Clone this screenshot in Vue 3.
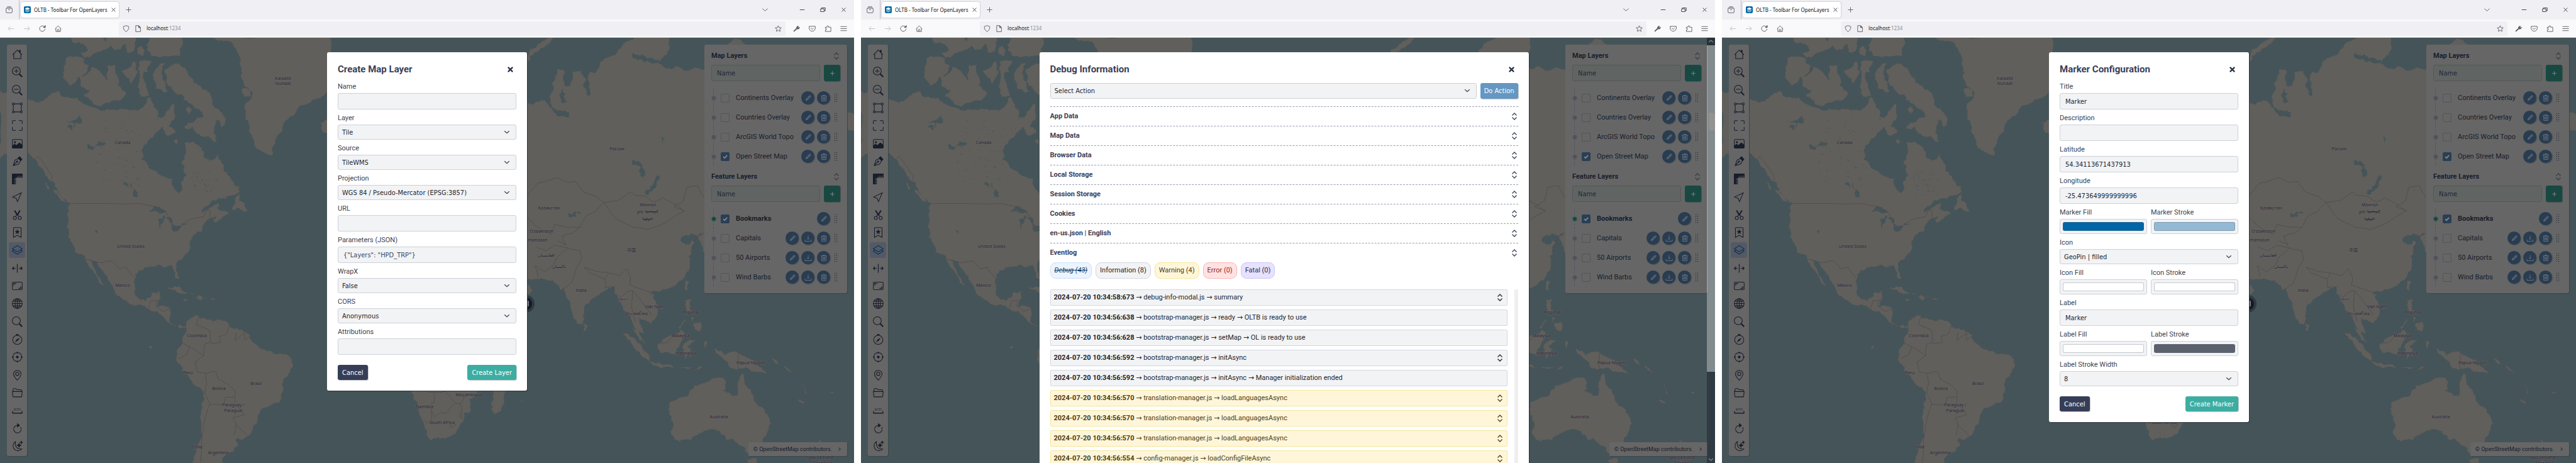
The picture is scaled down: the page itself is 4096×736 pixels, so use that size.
<script setup>
const icons = {
  home: '<path d="M1.5 13 12 2l10.500 11M4 11v10.500h16V11M17.500 3v4.500"/><path d="M16.500 3h2v5l-2-2z" fill="currentColor"/>',
  zoomIn: '<circle cx="9.800" cy="9.800" r="9"/><path d="M9.800 5v9.600M5 9.800h9.600"/><path d="m16.500 16.500 6.500 6.500" stroke-width="3"/>',
  zoomOut: '<circle cx="9.800" cy="9.800" r="9"/><path d="M5 9.800h9.600"/><path d="m16.500 16.500 6.500 6.500" stroke-width="3"/>',
  extent: '<circle cx="3" cy="3" r="2.200"/><circle cx="21" cy="3" r="2.200"/><circle cx="3" cy="21" r="2.200"/><circle cx="21" cy="21" r="2.200"/><path d="M5.200 3h13.600M5.200 21h13.600M3 5.200v13.600M21 5.200v13.600"/>',
  fullscreen: '<path d="M1 8.500V2.500Q1 1 2.500 1h6M15.500 1h6Q23 1 23 2.500v6M23 15.500v6q0 1.500-1.500 1.500h-6M8.500 23h-6Q1 23 1 21.500v-6"/>',
  image: '<rect x="1" y="2.500" width="22" height="19" rx="2"/><circle cx="6.800" cy="8.500" r="2.300" fill="currentColor" stroke="none"/><path d="M1 17l5-4 4 3 6.500-6L23 15v5q0 1.500-1.500 1.500h-19Q1 21.500 1 20z" fill="currentColor"/>',
  pen: '<path d="M3 21.500 7 9l8-3.500 4.500 5L15 18zM3 21.500l8-8.500"/><circle cx="11.500" cy="12.500" r="1.400" fill="currentColor"/><path d="m14 4.500 3-3 5.500 6-3 3z" fill="currentColor"/>',
  ruler: '<path d="M0 0h24v9h-2V4h-1v5h-2V6h-1v3h-2V4h-1v5h-2V6h-1v3H9v1H6v1h3v2H4v1h5v2H6v1h3v2H4v1h5v2H6v1h3v1H0z" fill="currentColor" stroke="none"/>',
  arrow: '<path d="M21 2 1.500 11.500l8 3L12.500 22z"/>',
  cut: '<circle cx="6.500" cy="19" r="3.500"/><circle cx="17.500" cy="19" r="3.500"/><path d="M8 15.500 12 11l4 4.500"/><path d="m6 2 6.300 11M18 2l-6.300 11" stroke-width="3"/>',
  bookmark: '<path d="M3.500 23V2.500Q3.500 1 5 1h14q1.500 0 1.500 1.500V23L12 18.500z"/><path d="m12 6.500 1.100 2.600 2.700.2-2.100 1.800.7 2.700-2.400-1.500-2.400 1.500.7-2.700-2.100-1.800 2.700-.2z" fill="currentColor"/>',
  layers: '<path d="m1 9 11-7 11 7-11 7z"/><path d="M4.500 12 1 14.300l11 7 11-7-3.500-2.300"/>',
  split: '<path d="M12 2v20M8.500 12H1M4.500 8.500 1 12l3.500 3.500M15.500 12H23M19.500 8.500 23 12l-3.500 3.500" stroke-width="1.700"/>',
  aspect: '<rect x="1" y="3.500" width="22" height="17" rx="2"/><path d="M4 11V6.500h5.500M20 13v4.500h-5.500" stroke-width="1.800"/>',
  globe: '<circle cx="12" cy="12" r="11"/><ellipse cx="12" cy="12" rx="5" ry="11"/><path d="M12 1v22M1 12h22M2.500 6.500h19M2.500 17.500h19"/>',
  search: '<circle cx="9.800" cy="9.800" r="9"/><path d="m16.500 16.500 6.500 6.500" stroke-width="3"/>',
  compass: '<circle cx="12" cy="13" r="10.300"/><path d="M9.500 1.500h5" stroke-width="3"/><path d="m17.500 8-4 6.500-7 4.500 4-7z" fill="currentColor" stroke="none"/>',
  target: '<circle cx="12" cy="12" r="10"/><circle cx="12" cy="12" r="3" fill="currentColor" stroke="none"/><path d="M12 0v4M12 20v4M0 12h4M20 12h4" stroke-width="2"/>',
  pin: '<path d="M12 23Q3.500 14 3.500 9a8.500 8 0 0 1 17 0q0 5-8.500 14z"/><circle cx="12" cy="9" r="3.700"/>',
  folder: '<path d="M2.500 9V4Q2.500 2.500 4 2.500h5L12 5h8q1.500 0 1.500 1.500V9M1 9h22l-1 10.500q-.2 1.500-1.700 1.500H3.700Q2.200 21 2 19.500z"/>',
  scale: '<path d="M1.500 13.500V18h21v-4.500" stroke-width="1.900"/>',
  refresh: '<path d="M19.500 8.500A8.500 8.500 0 1 1 13 4.500"/><path d="m12.500 1 4.500 3.500L12.500 8z" fill="currentColor"/>',
  moon: '<path d="M8 1.500A11 11 0 1 0 22 18Q11 19 8 10 7 6 8 1.500z"/><path d="m16 5.500 1.200 3 3 1.200-3 1.200-1.200 3-1.200-3-3-1.200 3-1.200zM21 .8l.8 1.700 1.700.7-1.700.8-.8 1.700-.7-1.700-1.800-.8 1.800-.7z" fill="currentColor"/>',
  edit: '<path d="m5 19 1.500-5L17 3.500Q18 3 19 3.800l1.200 1.200q.8 1 0 2L10 17.500zM6.500 14 10 17.500M15 5.500 18.500 9M8.500 15.700 16.800 7.500"/>',
  trash: '<path d="M3 5.500h18M9 5V3h6v2M5 5.500 5.500 21h13L19 5.500M9 9v8.500M12 9v8.500M15 9v8.500"/>',
  download: '<path d="M12 3v12M8.500 11.500 12 15l3.500-3.500M2 15.500V21h20v-5.500"/>',
  plus: '<path d="M12 3v18M3 12h18"/>',
  close: '<path d="m4 4 16 16M20 4 4 20"/>',
  sort: '<path d="m5 9 7-7 7 7M5 15l7 7 7-7"/>',
  chevron: '<path d="m3 8 9 8 9-8"/>',
  chevronUp: '<path d="m3 16 9-8 9 8"/>',
  right: '<path d="m8 5 8 7-8 7"/>',
  back: '<path d="M22 12H2M10 4l-8 8 8 8"/>',
  forward: '<path d="M2 12h20M14 4l8 8-8 8"/>',
  reload: '<path d="M21 12.500A9.500 9.500 0 1 1 17.500 4.500"/><path d="M15 8h7V1z" fill="currentColor"/>',
  house: '<path d="m1.500 12.500 10.500-10 10.500 10M4 10.500V22h16V10.500M9.500 22v-6q0-2 2.500-2t2.500 2v6"/>',
  recent: '<path d="M5 1.500h14M2.500 6h19"/><rect x="1.500" y="6" width="21" height="16.500" rx="2.500"/><path d="M9 12h6"/>',
  shield: '<path d="M12 1.500 21.500 5q.5 11-9.500 17.500Q2 16 2.500 5z"/>',
  page: '<path d="M4 1.500h10.500L20.500 8v14.500H4z"/><path d="M14 2v6.500h6z" fill="currentColor"/>',
  star: '<path d="m12 2 3 6.500 7.500.8-5.500 5 1.500 7.200-6.500-3.700-6.500 3.700L7 14.300l-5.500-5 7.500-.8z"/>',
  wrench: '<path d="m2.500 21.500 10-9.500" stroke-width="4"/><path d="M12 11Q11 5 17 3.500l2 .5-2.500 3 2 2 4-1.500Q22 14 15.500 13.500z" fill="currentColor"/>',
  pocket: '<path d="M1.500 4h21v7q-1.500 9.500-10.500 10Q3 20.500 1.500 11z"/><path d="m7 10 5 4.500L17 10"/>',
  puzzle: '<path d="M3 22V16.500q4.500.5 4.500-2.500T3 11.500V7h6q-1-5 2.500-5T14 7h8v15z"/>',
  menu: '<path d="M1 5h22M1 12h22M1 19h22"/>',
  minimize: '<path d="M2 12h20"/>',
  restore: '<path d="M2 8h15v12H2zM6 8V4h16v12h-5"/>',
  logo: '<path d="m3 7.500 9-4.500 9 4.500-9 4.500z" fill="currentColor"/><path d="m3 12.500 9 4.500 9-4.500M3 17l9 4.500L21 17"/>',
  check: '<path d="m5 12.500 5 5L19.500 7"/>'
}

const tools = ['home', 'zoomIn', 'zoomOut', 'extent', 'fullscreen', 'image', 'pen', 'ruler', 'arrow', 'cut', 'bookmark',
  'layers', 'split', 'aspect', 'globe', 'search', 'compass', 'target', 'pin', 'folder', 'scale', 'refresh', 'moon']

const groups = [
  {
    title: 'Map Layers',
    rows: [
      { name: 'Continents Overlay', on: false, actions: ['edit', 'trash'] },
      { name: 'Countries Overlay', on: false, actions: ['edit', 'trash'] },
      { name: 'ArcGIS World Topo', on: false, actions: ['edit', 'trash'] },
      { name: 'Open Street Map', on: true, actions: ['edit', 'trash'] }
    ]
  },
  {
    title: 'Feature Layers',
    rows: [
      { name: 'Bookmarks', on: true, active: true, actions: ['edit'] },
      { name: 'Capitals', on: false, actions: ['edit', 'download', 'trash'] },
      { name: '50 Airports', on: false, actions: ['edit', 'download', 'trash'] },
      { name: 'Wind Barbs', on: false, actions: ['edit', 'download', 'trash'] }
    ]
  }
]

const screens = [
  {
    id: 'layer',
    title: 'Create Map Layer',
    submit: 'Create Layer',
    fields: [
      { label: 'Name', type: 'text', value: '' },
      { label: 'Layer', type: 'select', value: 'Tile' },
      { label: 'Source', type: 'select', value: 'TileWMS' },
      { label: 'Projection', type: 'select', value: 'WGS 84 / Pseudo-Mercator (EPSG:3857)' },
      { label: 'URL', type: 'text', value: '' },
      { label: 'Parameters (JSON)', type: 'text', value: '', placeholder: '{"Layers": "HPD_TRP"}' },
      { label: 'WrapX', type: 'select', value: 'False' },
      { label: 'CORS', type: 'select', value: 'Anonymous' },
      { label: 'Attributions', type: 'text', value: '' }
    ]
  },
  { id: 'debug', title: 'Debug Information', debug: true },
  {
    id: 'marker',
    title: 'Marker Configuration',
    submit: 'Create Marker',
    fields: [
      { label: 'Title', type: 'text', value: 'Marker' },
      { label: 'Description', type: 'text', value: '' },
      { label: 'Latitude', type: 'text', value: '54.34113671437913' },
      { label: 'Longitude', type: 'text', value: '-25.473649999999996' },
      { label: 'Marker Fill', type: 'color', value: '#0166a5' },
      { label: 'Marker Stroke', type: 'color', value: '#93b9d5' },
      { label: 'Icon', type: 'select', value: 'GeoPin | filled' },
      { label: 'Icon Fill', type: 'color', value: '#ffffff' },
      { label: 'Icon Stroke', type: 'color', value: '#ffffff' },
      { label: 'Label', type: 'text', value: 'Marker' },
      { label: 'Label Fill', type: 'color', value: '#ffffff' },
      { label: 'Label Stroke', type: 'color', value: '#5c616e' },
      { label: 'Label Stroke Width', type: 'select', value: '8' }
    ]
  }
]

const sections = ['App Data', 'Map Data', 'Browser Data', 'Local Storage', 'Session Storage', 'Cookies', 'en-us.json | English', 'Eventlog']
const chips = [
  { text: 'Debug (43)', kind: 'debug' },
  { text: 'Information (8)', kind: 'info' },
  { text: 'Warning (4)', kind: 'warning' },
  { text: 'Error (0)', kind: 'error' },
  { text: 'Fatal (0)', kind: 'fatal' }
]
const day = '2024-07-20 '
const log = [
  { time: '10:34:58:673', text: 'debug-info-modal.js → summary', kind: 'info', more: true },
  { time: '10:34:56:638', text: 'bootstrap-manager.js → ready → OLTB is ready to use', kind: 'info' },
  { time: '10:34:56:628', text: 'bootstrap-manager.js → setMap → OL is ready to use', kind: 'info' },
  { time: '10:34:56:592', text: 'bootstrap-manager.js → initAsync', kind: 'info', more: true },
  { time: '10:34:56:592', text: 'bootstrap-manager.js → initAsync → Manager initialization ended', kind: 'info' },
  { time: '10:34:56:570', text: 'translation-manager.js → loadLanguagesAsync', kind: 'warning', more: true },
  { time: '10:34:56:570', text: 'translation-manager.js → loadLanguagesAsync', kind: 'warning', more: true },
  { time: '10:34:56:570', text: 'translation-manager.js → loadLanguagesAsync', kind: 'warning', more: true },
  { time: '10:34:56:554', text: 'config-manager.js → loadConfigFileAsync', kind: 'warning', more: true }
]

/* Map geometry: three sheets, each with its own grid, placed on one 1358 x 676 canvas. */
const sheets = {
  west: (x, y) => [x * 0.3338, y * 0.4692 - 60],
  east: (x, y) => [834.7 + x * 0.3429, y * 0.4692 - 60],
  south: (x, y) => [438.6 + x * 0.2887, 548.4 + y * 0.2358]
}

let seed = 7
const random = () => {
  seed = (seed * 16807) % 2147483647
  return seed / 2147483647 - 0.5
}

const parse = (sheet, text) => text.split(' ').map(p => sheets[sheet](...p.split(',').map(Number)))

/* Midpoint displacement gives the coastlines their ragged edge. */
function roughen(points, closed, amount, rounds) {
  let list = points
  for (let r = 0; r < rounds; r++) {
    const next = []
    const last = closed ? list.length : list.length - 1
    for (let i = 0; i < last; i++) {
      const a = list[i]
      const b = list[(i + 1) % list.length]
      const len = Math.hypot(b[0] - a[0], b[1] - a[1])
      next.push(a)
      if (len > 2) {
        const k = Math.min(len, 14) * amount
        next.push([(a[0] + b[0]) / 2 + random() * k, (a[1] + b[1]) / 2 + random() * k])
      }
    }
    if (!closed) next.push(list[list.length - 1])
    list = next
  }
  return list
}
const toPath = (pts, closed) => 'M' + pts.map(p => p[0].toFixed(1) + ' ' + p[1].toFixed(1)).join('L') + (closed ? 'Z' : '')
const shape = (sheet, text, amount = 0.42) => toPath(roughen(parse(sheet, text), true, amount, 3), true)
const line = (sheet, text, amount = 0.1) => toPath(roughen(parse(sheet, text), false, amount, 2), false)

const landData = {
  west: [
    '0,308 35,312 80,320 128,330 150,340 180,348 215,335 245,318 275,308 290,325 330,332 365,330 385,345 420,360 455,365 500,375 540,372 590,370 620,372 655,375 690,355 700,335 715,330 725,345 745,370 750,395 765,400 790,385 805,370 830,350 835,395 800,430 770,430 740,450 710,470 690,490 675,510 675,540 695,548 710,570 750,585 790,600 820,605 828,640 850,655 865,645 862,620 890,595 880,565 865,550 885,520 878,485 910,482 940,490 960,510 975,535 1000,545 1020,540 1037,520 1060,555 1090,595 1110,615 1140,632 1142,650 1110,660 1075,672 1040,672 1010,680 970,705 960,720 985,710 1020,695 1045,690 1035,705 1060,715 1090,720 1060,735 1025,755 1015,745 1030,735 1000,738 980,750 965,765 965,780 940,785 920,795 905,815 900,850 880,865 855,880 840,893 838,915 850,945 835,940 825,910 815,898 790,905 765,898 740,903 715,903 690,905 660,915 642,930 637,955 640,990 665,1015 690,1020 720,1005 730,990 765,985 765,1010 750,1040 775,1035 810,1045 812,1070 805,1085 830,1105 860,1100 885,1105 880,1112 850,1110 815,1100 780,1075 755,1060 730,1055 700,1045 680,1035 650,1035 600,1018 560,1002 545,990 540,975 525,955 505,930 480,910 455,885 430,878 440,900 460,925 480,950 495,968 485,965 465,940 440,915 425,905 405,877 390,860 365,858 345,825 325,798 318,765 325,735 320,705 340,690 320,685 290,660 265,635 250,615 230,605 215,590 200,570 180,555 150,530 128,520 35,520 0,535',
    '885,1105 905,1080 945,1068 960,1080 1000,1082 1050,1083 1080,1090 1100,1110 1160,1125 1190,1135 1215,1165 1230,1175 1300,1195 1350,1200 1390,1217 1396,1240 1370,1275 1350,1290 1345,1330 1320,1365 1270,1380 1235,1400 1225,1430 1200,1460 1175,1480 1150,1492 1120,1490 1135,1510 1110,1530 1070,1545 1060,1575 925,1575 935,1530 955,1490 960,1430 965,1380 970,1330 920,1300 890,1270 860,1235 838,1215 850,1180 870,1160 885,1130',
    '975,120 1568,120 1568,310 1540,325 1480,348 1425,360 1400,390 1350,420 1335,450 1305,490 1295,528 1250,515 1210,490 1185,440 1170,400 1165,360 1190,340 1200,310 1165,290 1155,270 1150,230 1140,190 1115,160 1085,140 1040,138',
    '1525,415 1550,405 1600,410 1600,455 1560,455 1530,435',
    '335,120 480,120 500,140 560,150 510,165 440,185 400,195 375,178 420,170 400,150 350,145',
    '700,150 720,120 860,120 860,190 720,190 700,170',
    '505,120 640,120 635,175 605,178 600,150 545,170',
    '315,195 360,192 400,200 425,225 395,255 370,262 335,290 300,260 305,235',
    '380,260 435,228 480,245 510,275 515,220 550,215 560,290 600,315 590,330 570,340 525,345 490,355 450,355 420,330 400,325 430,305 385,290',
    '580,240 640,208 655,240 625,285 600,260',
    '660,210 725,208 705,245 685,245 700,300 710,325 670,325 655,295 665,250',
    '732,270 740,235 760,218 785,215 772,240 775,270 790,290 800,310 780,315 745,300',
    '785,235 840,215 890,240 940,285 990,310 1010,350 1060,385 1075,400 1055,430 1030,405 1020,430 1035,480 1000,465 950,455 920,430 880,435 885,425 940,400 970,395 950,370 900,350 870,320 830,310 800,290',
    '775,430 800,420 835,450 800,460 785,450', '885,370 900,360 912,375 898,388', '830,475 845,470 850,482 838,487', '655,165 672,155 688,170 680,190 660,185',
    '1105,710 1120,680 1145,655 1140,680 1165,690 1180,715 1150,712',
    '800,975 830,970 870,985 925,998 870,995 830,982', '925,1008 950,1000 990,1010 955,1018', '872,1013 890,1012 893,1018 876,1018', '1005,1012 1025,1012 1025,1016 1006,1016',
    '255,640 270,645 305,675 310,688 280,670', '215,618 225,622 235,645 225,640', '1155,300 1180,300 1195,325 1165,330', '710,1175 722,1172 725,1180 714,1181'
  ],
  east: [
    '-30,230 10,190 60,150 100,132 140,120 120,140 70,165 20,205 -25,250',
    '-400,345 10,345 40,355 75,340 110,360 150,395 200,400 205,380 170,375 125,365 120,340 125,280 150,235 185,240 185,290 210,290 220,245 260,240 280,265 270,290 300,325 290,270 300,245 330,245 350,210 400,190 440,165 470,140 520,120 655,120 670,165 640,195 620,215 640,225 700,225 740,240 800,230 850,240 850,790 800,800 770,790 735,800 720,815 745,830 775,815 790,822 770,850 760,870 765,895 745,930 700,965 650,980 620,990 600,985 580,990 600,1015 615,1040 612,1070 585,1095 560,1085 530,1075 535,1100 550,1130 515,1120 495,1085 480,1060 455,1040 430,1010 415,970 390,975 370,985 340,1000 315,1010 275,1045 275,1080 265,1100 240,1095 220,1060 195,1010 185,975 165,985 130,950 50,945 -100,940 -400,700',
    '800,800 830,790 850,800 850,860 825,850', '-40,950 10,965 35,985 10,1000 -40,1010',
    '272,1095 290,1105 285,1120 270,1120', '580,998 602,998 596,1010', '745,950 762,955 750,985 742,970', '745,1015 770,1015 765,1050 790,1065 760,1060 745,1040', '780,1100 815,1090 812,1122 790,1118', '770,1075 785,1078 775,1095', '740,1085 745,1080 715,1115 712,1110',
    '455,1130 480,1130 540,1170 575,1200 578,1222 540,1205 500,1170', '500,1112 530,1125 555,1165 530,1150', '620,1165 680,1135 720,1115 740,1140 715,1175 700,1200 640,1195 615,1180',
    '575,1225 620,1228 700,1243 620,1243', '735,1165 790,1152 752,1173 775,1182 765,1190 775,1212 755,1198 745,1218 735,1190', '720,1246 780,1243 760,1250', '780,1255 825,1240 800,1252', '835,1155 845,1160 838,1180 832,1168',
    '880,1180 910,1188 925,1205 980,1190 1040,1215 1065,1235 1130,1265 1090,1260 1040,1250 990,1250 950,1245 940,1225 905,1205',
    '1145,1213 1160,1218 1180,1236 1165,1232', '1200,1238 1218,1248 1238,1262 1220,1256', '1260,1348 1278,1356 1295,1368 1280,1364', '1415,1330 1430,1325 1430,1332 1418,1334', '1290,1300 1300,1315 1305,1335 1297,1322',
    '670,1370 700,1355 760,1335 790,1305 840,1295 870,1280 920,1280 930,1300 920,1325 960,1345 985,1340 990,1290 1005,1265 1020,1300 1045,1320 1060,1350 1100,1380 1135,1420 1130,1455 1100,1500 1075,1530 1030,1535 1000,1510 960,1485 935,1490 905,1460 840,1458 790,1475 740,1490 695,1490 685,1475 690,1440 670,1405 665,1385',
    '1030,1558 1075,1555 1065,1580 1040,1580', '1355,1488 1382,1496 1368,1500', '1365,1560 1400,1568 1370,1580', '1480,365 1527,390 1540,390 1540,445 1480,430', '930,170 960,138 1000,135 1040,170'
  ],
  south: [
    '700,-100 745,54 760,90 780,130 785,180 792,220 808,262 820,300 835,330 832,350 840,372 857,388 880,375 930,375 965,360 1000,315 1030,265 1040,225 1035,210 1075,185 1075,150 1062,110 1090,95 1110,54 1150,-100',
    '1210,0 1195,54 1198,110 1185,140 1192,190 1213,207 1238,193 1250,150 1270,54 1280,0', '1350,120 1358,120 1358,127 1352,127'
  ]
}
const waterData = {
  west: ['710,715 760,700 795,715 750,718', '760,740 785,730 775,745 770,775 757,770', '790,735 820,740 828,765 812,755', '818,772 865,765 822,779', '620,620 630,640 645,640 652,670 630,655', '415,490 450,500 470,475 505,485 440,510', '310,405 380,390 398,405 360,415 350,435', '320,430 345,425 340,440', '455,780 465,785 460,790', '590,612 605,618 612,640 598,628', '860,765 895,755 880,762'],
  east: ['552,655 580,643 622,595 615,625 590,648', '200,722 250,717 262,722 232,725 228,738 205,735', '495,545 510,540 545,560 548,600 535,595 540,570', '630,465 650,470 640,485', '160,320 175,300 180,330 195,345 180,350', '500,180 540,185 580,195 620,200 560,210 510,200']
}
const borderData = {
  west: [
    '340,690 670,690', '670,690 735,700 790,720 820,745 820,778 865,765 900,745 925,740 970,735 985,710 1000,712 1000,735', '128,520 165,540 180,530 205,550 248,595 248,610', '405,877 480,890 510,885 535,885 570,912 600,905 642,943',
    '705,1045 720,1018 750,1018 740,1035 775,1055 810,1045', '815,1088 820,1100',
    '950,1070 935,1100 1000,1120 1005,1160 975,1165 970,1205 930,1225 940,1260 980,1265 1025,1258 1040,1285 1080,1300 1120,1325 1120,1370 1165,1405 1110,1415 1125,1440 1175,1475', '860,1160 905,1175 890,1200 850,1215', '905,1175 940,1190 970,1205',
    '980,1268 985,1300 975,1330 1000,1370 990,1385 970,1440 960,1500 955,1568', '1000,1370 1065,1370 1075,1345 1115,1345', '1095,1100 1080,1130 1045,1140 1050,1160 1005,1165', '1165,1128 1120,1155 1125,1125', '1125,1440 1115,1475', '1165,1128 1165,1152 1190,1140'
  ],
  east: [
    '10,665 60,620 150,602 200,618 235,615 270,650 330,665 365,685 330,715 280,735 255,770 200,770 140,760 120,795 60,770 10,735', '365,685 430,680 490,650 510,662 560,665 600,685 640,670 690,690 740,715 700,730 650,755 570,778 500,770 420,740 390,710 365,685', '740,715 690,700 735,680 750,635 800,630 832,670', '770,855 800,800 830,790',
    '50,835 100,850 140,830 200,840 255,850 262,880 240,905 215,960 165,985', '60,940 48,900 90,920 130,900 150,870 200,840', '275,905 330,920 390,925 370,945 300,925 275,905', '370,945 375,975 400,970 415,985', '395,925 440,935 470,910 490,940 485,965 520,975 560,985 580,990', '500,985 530,1010 560,1040 590,1070', '440,1010 470,990 500,985 495,1040 510,1090', '255,770 220,790 170,800 190,830 150,815', '989,1198 989,1250', '620,1162 660,1160 690,1135'
  ],
  south: ['872,70 872,135 859,135 858,262', '840,62 905,66 935,58 990,140 1015,142 1040,95', '858,190 875,230 905,200 935,207 965,165 990,140', '1015,142 1025,180 1022,207', '808,262 818,255 835,272 858,262', '955,290 975,275 990,283 970,304 957,290', '1010,215 1022,207 1028,235 1015,238 1010,215']
}

const collect = (data, fn) => Object.entries(data).flatMap(([sheet, list]) => list.map(t => fn(sheet, t)))
const lands = collect(landData, (s, t) => shape(s, t))
const waters = collect(waterData, (s, t) => shape(s, t, 0.7))
const borders = collect(borderData, (s, t) => line(s, t))

/* Scattered small lakes over the northern interior. */
const lakes = Array.from({ length: 150 }, (_, i) => {
  const spread = i % 3
  const x = spread === 2 ? 970 + random() * 130 : 600 + random() * 300
  const y = spread === 2 ? 620 + random() * 90 : 510 + random() * 240
  const [cx, cy] = sheets.west(x, y)
  const w = 1 + (random() + 0.5) * 3
  return `M${cx.toFixed(1)} ${cy.toFixed(1)}l${w.toFixed(1)} ${(random() * 3).toFixed(1)}l${(-w / 2).toFixed(1)} 1Z`
}).join('')

const labels = [
  ['west', 1348, 264, 'Kalaallit'], ['west', 1348, 282, 'Nunaat'], ['west', 583, 481, 'Canada'], ['west', 622, 833, 'United States'], ['west', 583, 965, 'México'],
  ['west', 939, 1137, 'Colombia'], ['west', 896, 1261, 'Perú'], ['west', 1043, 1315, 'Bolivia'], ['west', 1218, 1297, 'Brasil'], ['west', 1111, 1371, 'Paraguay /'], ['west', 1111, 1389, 'Paraguái'], ['west', 942, 1514, 'Chile'], ['west', 1040, 1532, 'Argentina'],
  ['east', 428, 503, 'Россия'], ['east', 112, 704, 'Қазақстан'], ['east', 571, 693, 'Монгол'], ['east', 571, 717, 'улс ᠮᠣᠩᠭᠣᠯ'], ['east', 571, 741, 'ᠤᠯᠤᠰ'], ['east', 78, 783, 'Oʻzbekiston'], ['east', 38, 811, 'Türkmenistan'], ['east', 98, 864, 'افغانستان'], ['east', 157, 902, 'پاکستان'], ['east', 494, 846, '中国'],
  ['east', 261, 982, 'India'], ['east', 454, 1011, 'မြန်မာ'], ['east', 603, 1037, 'Việt Nam'], ['east', 516, 1061, 'ประเทศไทย'], ['east', 770, 1058, 'Pilipinas'], ['east', 722, 1137, 'Malaysia'], ['east', 744, 1195, 'Indonesia'], ['east', 1048, 1227, 'Papua Niugini'], ['east', 898, 1411, 'Australia'], ['east', 1370, 1550, 'New Zealand'], ['east', 1380, 1567, 'Aotearoa'],
  ['south', 1066, 79, 'Moçambique'], ['south', 819, 158, 'Namibia'], ['south', 916, 265, 'South Africa']
].map(([s, x, y, text]) => {
  const [cx, cy] = sheets[s](x, y)
  return { x: Math.round(cx), y: Math.round(cy) + 3, text }
})
</script>

<template>
  <main class="board">
    <section v-for="s in screens" :key="s.id" class="window">
      <header class="tabs">
        <button class="tool recent" aria-label="Recent"><svg class="ico" viewBox="0 0 24 24" v-html="icons.recent"></svg></button>
        <div class="tab">
          <span class="favicon"><svg class="ico" viewBox="0 0 24 24" v-html="icons.logo"></svg></span>
          <span class="tab-title">OLTB - Toolbar For OpenLayers</span>
          <button class="tab-close" aria-label="Close tab"><svg class="ico" viewBox="0 0 24 24" v-html="icons.close"></svg></button>
        </div>
        <button class="tool new-tab" aria-label="New tab"><svg class="ico" viewBox="0 0 24 24" v-html="icons.plus"></svg></button>
        <div class="frame-controls">
          <button class="tool list" aria-label="List tabs"><svg class="ico" viewBox="0 0 24 24" v-html="icons.chevron"></svg></button>
          <button class="tool frame" aria-label="Minimize"><svg class="ico" viewBox="0 0 24 24" v-html="icons.minimize"></svg></button>
          <button class="tool frame" aria-label="Restore"><svg class="ico" viewBox="0 0 24 24" v-html="icons.restore"></svg></button>
          <button class="tool frame" aria-label="Close"><svg class="ico" viewBox="0 0 24 24" v-html="icons.close"></svg></button>
        </div>
      </header>
      <nav class="nav">
        <button class="tool faded" aria-label="Back"><svg class="ico" viewBox="0 0 24 24" v-html="icons.back"></svg></button>
        <button class="tool faded" aria-label="Forward"><svg class="ico" viewBox="0 0 24 24" v-html="icons.forward"></svg></button>
        <button class="tool" aria-label="Reload"><svg class="ico" viewBox="0 0 24 24" v-html="icons.reload"></svg></button>
        <button class="tool" aria-label="Home"><svg class="ico" viewBox="0 0 24 24" v-html="icons.house"></svg></button>
        <div class="address">
          <svg class="ico" viewBox="0 0 24 24" v-html="icons.shield"></svg>
          <svg class="ico" viewBox="0 0 24 24" v-html="icons.page"></svg>
          <span class="url">localhost<span class="port">:1234</span></span>
          <svg class="ico" viewBox="0 0 24 24" v-html="icons.star"></svg>
        </div>
        <button v-for="n in ['wrench', 'pocket', 'puzzle', 'menu']" :key="n" class="tool" :aria-label="n"><svg class="ico" viewBox="0 0 24 24" v-html="icons[n]"></svg></button>
      </nav>

      <div class="page">
        <svg class="map" viewBox="0 0 1358 676" preserveAspectRatio="xMidYMin slice">
          <path v-for="(d, i) in lands" :key="'l' + i" class="land" :d="d" />
          <path v-for="(d, i) in waters" :key="'w' + i" class="water" :d="d" />
          <path class="water" :d="lakes" />
          <path v-for="(d, i) in borders" :key="'b' + i" class="border" :d="d" />
          <text v-for="l in labels" :key="l.text" class="place" :x="l.x" :y="l.y">{{ l.text }}</text>
          <circle class="halo" cx="836" cy="423" r="14" />
          <circle class="spot" cx="836" cy="423" r="10" />
          <path class="flag" d="M832 418h9v9h-9z" />
        </svg>

        <div class="toolbar">
          <button v-for="t in tools" :key="t" class="tb" :class="{ active: t === 'layers' }" :aria-label="t">
            <svg class="ico" viewBox="0 0 24 24">
              <g v-html="icons[t]"></g>
              <text v-if="t === 'scale'" class="km" x="12" y="13">km</text>
            </svg>
          </button>
        </div>

        <aside class="panel">
          <template v-for="g in groups" :key="g.title">
            <div class="panel-head">
              <h2>{{ g.title }}</h2>
              <svg class="ico sort" viewBox="0 0 24 24" v-html="icons.sort"></svg>
            </div>
            <div class="panel-add">
              <input type="text" placeholder="Name" :aria-label="g.title + ' name'" />
              <button class="add" aria-label="Add"><svg class="ico" viewBox="0 0 24 24" v-html="icons.plus"></svg></button>
            </div>
            <ul class="rows">
              <li v-for="r in g.rows" :key="r.name" class="row" :class="{ current: r.active }">
                <span class="dot"></span>
                <span class="box">
                  <input :id="s.id + '-' + r.name" type="checkbox" :checked="r.on" />
                  <svg v-if="r.on" class="ico tick" viewBox="0 0 24 24" v-html="icons.check"></svg>
                </span>
                <label :for="s.id + '-' + r.name">{{ r.name }}</label>
                <button v-for="a in r.actions" :key="a" class="round" :aria-label="a"><svg class="ico" viewBox="0 0 24 24" v-html="icons[a]"></svg></button>
                <span class="grip"></span>
              </li>
            </ul>
          </template>
        </aside>

        <footer class="credit">
          <span>© OpenStreetMap contributors.</span>
          <svg class="ico" viewBox="0 0 24 24" v-html="icons.right"></svg>
        </footer>

        <div v-if="s.debug" class="scrollbar">
          <span class="cap"><svg class="ico" viewBox="0 0 24 24" v-html="icons.chevronUp"></svg></span>
          <span class="thumb"></span>
          <span class="track"><svg class="ico" viewBox="0 0 24 24" v-html="icons.chevron"></svg></span>
        </div>

        <div class="stage" :class="{ scrolled: s.debug }">
          <article class="modal" :class="{ wide: s.debug }">
            <div class="modal-head">
              <h1>{{ s.title }}</h1>
              <button class="dismiss" aria-label="Close dialog"><svg class="ico" viewBox="0 0 24 24" v-html="icons.close"></svg></button>
            </div>

            <form v-if="!s.debug" class="form" @submit.prevent>
              <div v-for="f in s.fields" :key="f.label" class="field" :class="f.type">
                <label :for="s.id + '-' + f.label">{{ f.label }}</label>
                <span v-if="f.type === 'select'" class="picker">
                  <select :id="s.id + '-' + f.label"><option>{{ f.value }}</option></select>
                  <svg class="ico" viewBox="0 0 24 24" v-html="icons.chevron"></svg>
                </span>
                <input v-else :id="s.id + '-' + f.label" :type="f.type" :value="f.value" :placeholder="f.placeholder" />
              </div>
              <div class="buttons">
                <button type="button" class="btn dark">Cancel</button>
                <button type="submit" class="btn green">{{ s.submit }}</button>
              </div>
            </form>

            <template v-else>
              <div class="action">
                <span class="picker">
                  <select aria-label="Action"><option>Select Action</option></select>
                  <svg class="ico" viewBox="0 0 24 24" v-html="icons.chevron"></svg>
                </span>
                <button class="btn blue">Do Action</button>
              </div>
              <div v-for="t in sections" :key="t" class="section">
                <h3>{{ t }}</h3>
                <svg class="ico sort" viewBox="0 0 24 24" v-html="icons.sort"></svg>
              </div>
              <div class="chips">
                <button v-for="c in chips" :key="c.text" class="chip" :class="c.kind">{{ c.text }}</button>
              </div>
              <div class="log-wrap">
                <ul class="log">
                  <li v-for="(e, i) in log" :key="i" class="entry" :class="e.kind">
                    <span><b>{{ day }}{{ e.time }}</b> → {{ e.text }}</span>
                    <svg v-if="e.more" class="ico sort" viewBox="0 0 24 24" v-html="icons.sort"></svg>
                  </li>
                </ul>
                <span class="log-bar"></span>
              </div>
            </template>
          </article>
        </div>
      </div>
    </section>
  </main>
</template>

<style>
body {
  margin: 0;
  background: #fff;
}
</style>

<style scoped>
* {
  box-sizing: border-box;
}
.board {
  display: grid;
  grid-template-columns: repeat(3, 1fr);
  gap: 11px;
  height: 100vh;
  font-family: Roboto, "DejaVu Sans", sans-serif;
  font-size: 11px;
  line-height: 16px;
  color: #3b4352;
}
h1, h2, h3, ul {
  margin: 0;
  padding: 0;
  list-style: none;
}
button {
  display: flex;
  align-items: center;
  justify-content: center;
  padding: 0;
  border: 0;
  background: none;
  color: inherit;
  font: inherit;
}
.ico {
  flex: none;
  width: 11px;
  height: 11px;
  fill: none;
  stroke: currentColor;
  stroke-width: 2;
  overflow: visible;
}
.window {
  display: flex;
  flex-direction: column;
  min-width: 0;
  overflow: hidden;
}

/* Browser chrome */
.tabs {
  display: flex;
  flex: none;
  align-items: center;
  height: 31px;
  background: #f0f0f4;
  color: #5b5b66;
  font-family: "Noto Sans", sans-serif;
  font-size: 8px;
}
.tool {
  width: 25px;
  height: 22px;
}
.tool.recent {
  width: 31px;
  height: 31px;
  padding-right: 2px;
  border-right: 1px solid #bcbcc4;
}
.tab {
  display: flex;
  align-items: center;
  width: 156px;
  height: 25px;
  margin: 0 3px 0 2px;
  padding: 0 5px;
  gap: 5px;
  border-radius: 3px;
  background: #fff;
  box-shadow: 0 0 2px #8f8f9d;
  color: #15141a;
}
.favicon {
  display: flex;
  flex: none;
  padding: 1px;
  border-radius: 2px;
  background: #0068a7;
  color: #fff;
}
.favicon .ico {
  width: 9px;
  height: 9px;
}
.tab-title {
  flex: 1;
  white-space: nowrap;
}
.tab-close {
  width: 10px;
}
.tab-close .ico {
  width: 9px;
  height: 9px;
}
.frame-controls {
  display: flex;
  margin-left: auto;
}
.tool.list {
  margin-right: 30px;
}
.tool.frame {
  width: 33px;
  color: #15141a;
}
.frame .ico {
  width: 9px;
  height: 9px;
}
.nav {
  display: flex;
  flex: none;
  align-items: center;
  height: 29px;
  padding: 0 4px 0 5px;
  border-bottom: 1px solid #cfd3d8;
  background: #f9f9fb;
  color: #5b5b66;
}
.faded {
  color: #bdbdc5;
}
.address {
  display: flex;
  flex: 1;
  align-items: center;
  gap: 8px;
  height: 23px;
  margin: 0 5px 0 84px;
  padding: 0 6px;
  border-radius: 3px;
  background: #f0f0f4;
}
.url {
  flex: 1;
  font-family: "Noto Sans", sans-serif;
  font-size: 8px;
  color: #15141a;
}
.port {
  color: #8a8a94;
}

/* Map */
.page {
  position: relative;
  flex: 1;
  min-height: 0;
  overflow: hidden;
  background: #455459;
}
.map {
  display: block;
  width: 100%;
  height: 100%;
}
.land {
  fill: #615f5b;
}
.water {
  fill: #455459;
}
.border {
  fill: none;
  stroke: #50484f;
  stroke-width: 1;
  opacity: 0.8;
}
.place {
  fill: #2b2230;
  stroke: #6a686a;
  stroke-width: 1px;
  paint-order: stroke;
  font-family: "Noto Sans", "Noto Sans CJK SC", sans-serif;
  font-size: 7px;
  text-anchor: middle;
}
.halo {
  fill: #2f3a42;
}
.spot {
  fill: #131826;
}
.flag {
  fill: #73777c;
}
.toolbar {
  position: absolute;
  top: 11px;
  bottom: 11px;
  left: 11px;
  display: flex;
  flex-direction: column;
  align-items: center;
  justify-content: space-between;
  width: 32px;
  padding: 3px 0;
  border-radius: 3px;
  background: #666;
  box-shadow: 1px 1px 1px #39464b;
}
.tb {
  width: 26px;
  height: 25px;
  border-radius: 3px;
  color: #181d2b;
}
.tb .ico {
  width: 17px;
  height: 17px;
  stroke-width: 1.5;
}
.tb.active {
  background: #535967;
  color: #05304f;
}
.km {
  fill: #2d3240;
  stroke: none;
  font-family: "Noto Sans", sans-serif;
  font-size: 11px;
  text-anchor: middle;
}

/* Layer panel */
.panel {
  position: absolute;
  top: 11px;
  right: 11px;
  width: 227px;
  padding: 10px 11px;
  border-radius: 3px;
  background: #666;
  box-shadow: 1px 1px 1px #39464b;
  color: #181d2b;
}
.panel-head {
  display: flex;
  align-items: center;
  justify-content: space-between;
  margin-bottom: 6px;
}
.panel-head h2 {
  font-size: 11px;
  line-height: 16px;
}
.ico.sort {
  width: 12px;
  height: 12px;
  stroke-width: 2.5;
}
.panel-head .sort {
  color: #383c46;
}
.panel-add {
  display: flex;
  gap: 6px;
}
.panel-add input {
  flex: 1;
  min-width: 0;
  height: 26px;
  padding: 0 8px;
  border: 1px solid #535859;
  border-radius: 3px;
  background: #606462;
  font: 11px "DejaVu Sans Condensed", "Noto Sans", sans-serif;
}
.panel-add input::placeholder {
  color: #22273a;
}
.add {
  width: 26px;
  height: 26px;
  border-radius: 3px;
  background: #194842;
  box-shadow: 1px 1px 1px #4b5050;
  color: #76807f;
}
.add .ico {
  width: 9px;
  height: 9px;
  stroke-width: 3;
}
.rows {
  margin: 11px 0 9px;
}
.rows:last-child {
  margin-bottom: 0;
}
.row {
  display: flex;
  align-items: center;
  height: 31px;
  gap: 4px;
  background: linear-gradient(to bottom, #50515a 50%, transparent 50%) 3px 0 / 1px 4px repeat-y;
}
.dot {
  flex: none;
  width: 8px;
  height: 8px;
  border: 1px solid #5f5f66;
  border-radius: 50%;
  background: #4f5059;
}
.current .dot {
  border: 1px solid #425f5b;
  background: #154840;
}
.box {
  position: relative;
  display: flex;
  margin: 0 6px 0 3px;
}
.box input {
  width: 14px;
  height: 14px;
  margin: 0;
  appearance: none;
  border: 1px solid #53555b;
  border-radius: 2px;
}
.box input:checked {
  border-color: #2a3f55;
  background: #2a3f55;
}
.tick {
  position: absolute;
  inset: 2px;
  width: 10px;
  height: 10px;
  color: #868b90;
  stroke-width: 4;
  pointer-events: none;
}
.row label {
  flex: 1;
  white-space: nowrap;
}
.current label {
  font-weight: 700;
}
.round {
  flex: none;
  width: 21px;
  height: 21px;
  border-radius: 50%;
  background: #293c50;
  box-shadow: 1px 1px 1px #4b5158;
  color: #7a8289;
}
.round .ico {
  width: 12px;
  height: 12px;
  stroke-width: 1.5;
}
.grip {
  flex: none;
  width: 6px;
  height: 15px;
  margin: 0 4px 0 2px;
  background: radial-gradient(circle, #181d2b 1px, transparent 1px) 0 0 / 3px 3px;
}
.credit {
  position: absolute;
  right: 11px;
  bottom: 11px;
  display: flex;
  align-items: center;
  gap: 8px;
  height: 22px;
  padding: 0 8px;
  border-radius: 2px;
  background: #666;
  box-shadow: 1px 1px 1px #39464b;
  color: #181d2b;
  font-size: 9px;
}
.credit .ico {
  width: 8px;
  height: 8px;
  stroke-width: 3;
}
.scrollbar {
  position: absolute;
  inset: 0 0 0 auto;
  display: flex;
  flex-direction: column;
  width: 13px;
  color: #868c92;
}
.scrollbar .ico {
  width: 9px;
  height: 9px;
  stroke-width: 3;
}
.cap {
  display: flex;
  justify-content: center;
  padding: 1px 0 2px;
  background: #273138;
}
.thumb {
  flex: 520;
  background: rgba(255, 255, 255, 0.33);
}
.track {
  display: flex;
  flex: 144;
  align-items: flex-end;
  justify-content: center;
  padding-bottom: 1px;
  background: rgba(34, 42, 51, 0.6);
}

/* Dialogs */
.stage {
  position: absolute;
  inset: 0;
  display: flex;
  align-items: flex-start;
  justify-content: center;
  padding-top: 23px;
  pointer-events: none;
}
.stage.scrolled {
  padding-right: 13px;
}
.modal {
  width: 318px;
  padding: 17px;
  border-radius: 3px;
  background: #fff;
  box-shadow: 1px 1px 1px #2d373c;
  pointer-events: auto;
}
.modal.wide {
  width: 778px;
}
.modal-head {
  display: flex;
  align-items: center;
  justify-content: space-between;
  padding-right: 4px;
  margin-bottom: 10px;
}
.wide .modal-head {
  margin-bottom: 12px;
}
.modal-head h1 {
  font-size: 15px;
  line-height: 20px;
  color: #37405a;
}
.dismiss {
  width: 12px;
  height: 12px;
  color: #2c3449;
}
.dismiss .ico {
  stroke-width: 5;
}
.form {
  display: grid;
  grid-template-columns: 1fr 1fr;
  gap: 6px;
}
.field {
  display: flex;
  flex-direction: column;
  grid-column: span 2;
  gap: 2px;
}
.field.color {
  grid-column: span 1;
}
.field input,
select {
  width: 100%;
  border: 1px solid #ccd1d9;
  border-radius: 3px;
  background: #f2f3f5;
  color: #23262e;
  font: 11px "DejaVu Sans Condensed", "Noto Sans", sans-serif;
}
.field input {
  height: 26px;
  padding: 0 8px;
}
.field input::placeholder {
  color: #3e485c;
}
.field.color input {
  height: 24px;
  padding: 4px;
}
input::-webkit-color-swatch-wrapper {
  padding: 0;
}
input::-webkit-color-swatch {
  border: 1px solid rgba(90, 100, 110, 0.35);
  border-radius: 3px;
}
.picker {
  position: relative;
  display: flex;
  flex: 1;
}
select {
  height: 24px;
  padding: 0 20px 0 6px;
  appearance: none;
}
.picker .ico {
  position: absolute;
  top: 7px;
  right: 10px;
  width: 10px;
  height: 10px;
  stroke-width: 3;
  pointer-events: none;
}
.buttons {
  display: flex;
  grid-column: span 2;
  justify-content: space-between;
  margin-top: 10px;
}
.btn {
  height: 24px;
  padding: 0 7px;
  border-radius: 3px;
  box-shadow: 1px 1px 1px #c4c8cc;
  color: #fff;
  font: 11px "DejaVu Sans Condensed", "Noto Sans", sans-serif;
  white-space: nowrap;
}
.dark {
  background: #363e57;
}
.green {
  background: #3dada2;
}
.blue {
  height: 25px;
  padding: 0 6px;
  background: #6597c2;
}
.action {
  display: flex;
  gap: 6px;
  margin-bottom: 12px;
}
.action select {
  height: 25px;
}
.section {
  display: flex;
  align-items: center;
  justify-content: space-between;
  height: 31px;
  border-top: 1px dashed #9a9fb4;
}
.section h3 {
  font-size: 11px;
  line-height: 16px;
  color: #37405a;
}
.section .sort {
  color: #37405a;
}
.chips {
  display: flex;
  gap: 6px;
  margin-bottom: 17px;
}
.chip {
  height: 26px;
  padding: 0 6px;
  border: 1px solid;
  border-radius: 9px;
}
.info {
  border-color: #d3d7e3;
  background: #f2f3f5;
  color: #23262e;
}
.warning {
  border-color: #f5e79a;
  background: #fff6da;
  color: #4b4013;
}
.chip.debug {
  border-color: #cfe0f5;
  background: #ebf4ff;
  color: #0b3c61;
  font-style: italic;
  text-decoration: line-through;
}
.error {
  border-color: #fbb3b3;
  background: #ffe3e3;
  color: #9b1c1c;
}
.fatal {
  border-color: #cdc6f5;
  background: #e6e2ff;
  color: #2f2a4d;
}
.log-wrap {
  display: flex;
  gap: 11px;
}
.log {
  display: flex;
  flex: 1;
  flex-direction: column;
  gap: 6px;
}
.entry {
  display: flex;
  align-items: center;
  justify-content: space-between;
  height: 26px;
  padding: 0 5px;
  border-width: 1px;
  border-style: solid;
  border-radius: 2px;
}
.log-bar {
  width: 6px;
  background: #efefef;
}
</style>
